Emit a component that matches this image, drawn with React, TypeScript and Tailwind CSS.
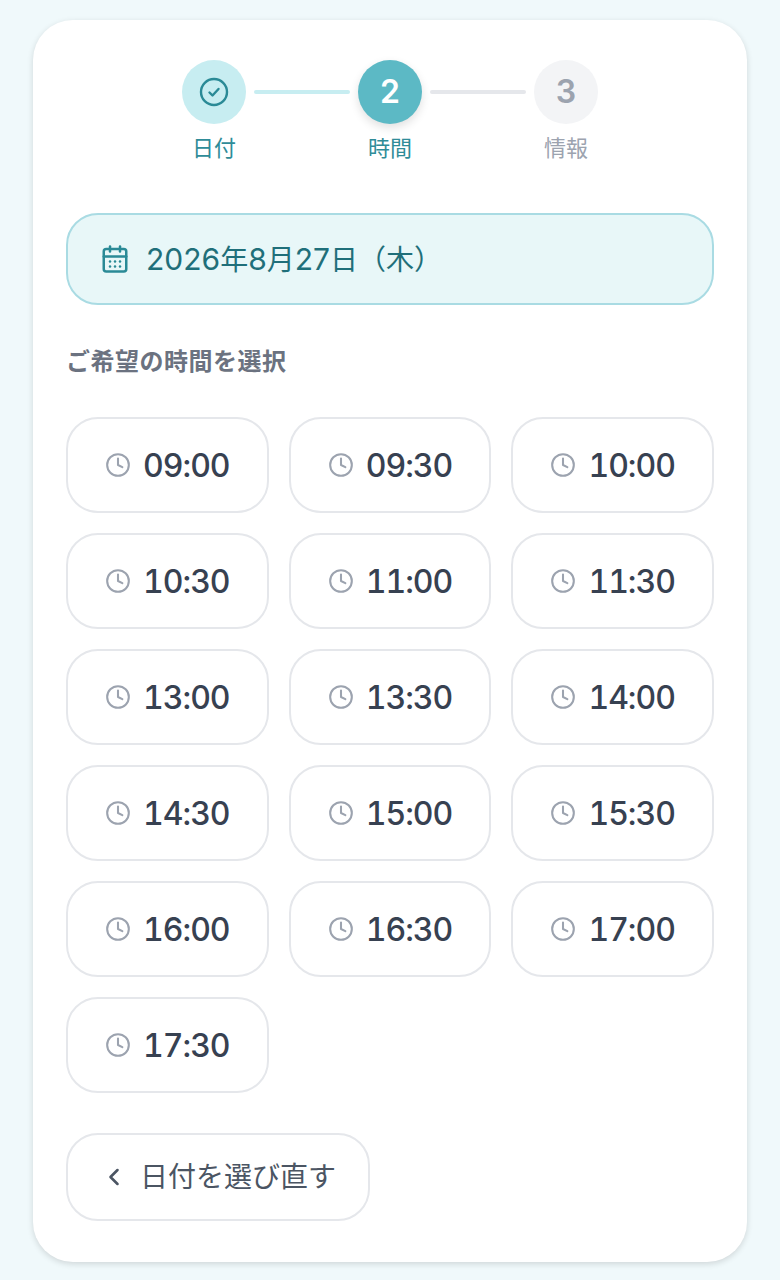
import React from 'react'
import { CalendarDays, ChevronLeft, Clock } from 'lucide-react'

const times = [
  '09:00', '09:30', '10:00', '10:30', '11:00', '11:30',
  '13:00', '13:30', '14:00', '14:30', '15:00', '15:30',
  '16:00', '16:30', '17:00', '17:30',
]

const CheckCircle = () => (
  <svg width="32" height="32" viewBox="0 0 32 32" fill="none" stroke="#2a8a96" strokeLinecap="round" strokeLinejoin="round">
    <circle cx="16" cy="16" r="13" strokeWidth="2.4" />
    <path d="M11.5 16.5l3 3 6-6.5" strokeWidth="2.4" />
  </svg>
)

const App = () => {
  return (
    <div className="min-h-[1280px] bg-[#f0f9fb] px-[33px] pt-[20px] pb-[18px] font-['Inter','Noto_Sans_CJK_JP',sans-serif]">
      <div className="rounded-[40px] bg-white px-[33px] pt-[40px] pb-[41px] shadow-[0_2px_6px_rgba(0,0,0,0.14)]">
        {/* Stepper */}
        <div className="flex justify-center">
          <div className="flex w-[64px] flex-col items-center">
            <div className="flex h-[64px] w-[64px] items-center justify-center rounded-full bg-[#c7edf1]">
              <CheckCircle />
            </div>
            <span className="mt-[8px] whitespace-nowrap text-[22px] leading-[32px] text-[#2f8c98]">日付</span>
          </div>
          <div className="mx-[8px] mt-[30px] h-[4px] w-[96px] rounded-full bg-[#c7edf1]" />
          <div className="flex w-[64px] flex-col items-center">
            <div className="flex h-[64px] w-[64px] items-center justify-center rounded-full bg-[#5cb9c5] text-[32px] font-semibold text-white shadow-[0_4px_10px_rgba(0,0,0,0.12)]">2</div>
            <span className="mt-[8px] whitespace-nowrap text-[22px] leading-[32px] text-[#2f8c98]">時間</span>
          </div>
          <div className="mx-[8px] mt-[30px] h-[4px] w-[96px] rounded-full bg-[#e5e7eb]" />
          <div className="flex w-[64px] flex-col items-center">
            <div className="flex h-[64px] w-[64px] items-center justify-center rounded-full bg-[#f3f4f6] text-[32px] font-semibold text-[#9ca3af]">3</div>
            <span className="mt-[8px] whitespace-nowrap text-[22px] leading-[32px] text-[#9ca3af]">情報</span>
          </div>
        </div>

        {/* Selected date */}
        <div className="mt-[49px] flex h-[92px] items-center gap-[16px] rounded-[32px] border-2 border-[#a9dbe3] bg-[#e8f7f8] px-[32px]">
          <CalendarDays size={30} strokeWidth={2} className="text-[#2a8a96]" />
          <span className="whitespace-nowrap text-[28px] leading-none text-[#1f6f7a]">
            <span className="text-[30px]">2026</span>年<span className="text-[30px]">8</span>月<span className="text-[30px]">27</span>日（木）
          </span>
        </div>

        <p className="mt-[41px] text-[24px] font-bold leading-[32px] tracking-[0.5px] text-[#6b7280]">ご希望の時間を選択</p>

        {/* Time slots */}
        <div className="mt-[39px] grid grid-cols-3 gap-[20px]">
          {times.map((t) => (
            <button key={t} className="flex h-[96px] items-center justify-center gap-[12px] rounded-[32px] border-2 border-[#e5e7eb] bg-white">
              <Clock size={26} strokeWidth={1.9} className="text-[#9ca3af]" />
              <span className="mt-[2px] text-[32px] font-[550] leading-none tracking-[-1px] tabular-nums text-[#374151]">{t}</span>
            </button>
          ))}
        </div>

        {/* Back */}
        <button className="mt-[40px] flex h-[88px] items-center gap-[12px] rounded-[32px] border-2 border-[#e5e7eb] bg-white px-[32px]">
          <ChevronLeft size={28} strokeWidth={2.2} className="text-[#4b5563]" />
          <span className="text-[28px] leading-none text-[#4b5563]">日付を選び直す</span>
        </button>
      </div>
    </div>
  )
}

export default App
